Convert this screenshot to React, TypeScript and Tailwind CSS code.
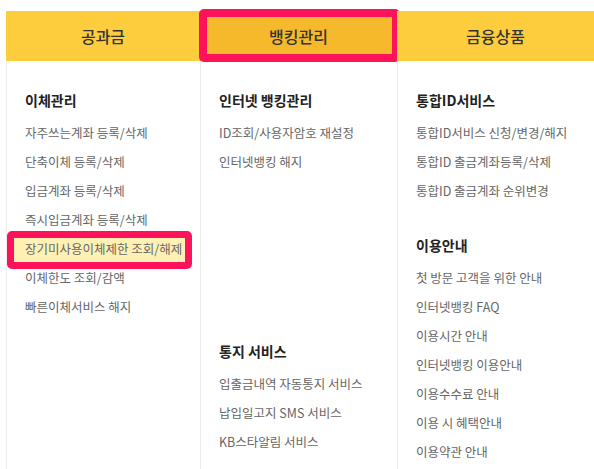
import React from "react";

type Group = {
  title: string;
  items: string[];
  gapTop?: string;
};

const columns: { tab: string; active?: boolean; groups: Group[] }[] = [
  {
    tab: "공과금",
    groups: [
      {
        title: "이체관리",
        items: [
          "자주쓰는계좌 등록/삭제",
          "단축이체 등록/삭제",
          "입금계좌 등록/삭제",
          "즉시입금계좌 등록/삭제",
          "장기미사용이체제한 조회/해제",
          "이체한도 조회/감액",
          "빠른이체서비스 해지",
        ],
      },
    ],
  },
  {
    tab: "뱅킹관리",
    active: true,
    groups: [
      {
        title: "인터넷 뱅킹관리",
        items: ["ID조회/사용자암호 재설정", "인터넷뱅킹 해지"],
      },
      {
        title: "통지 서비스",
        gapTop: "mt-[164px]",
        items: ["입출금내역 자동통지 서비스", "납입일고지 SMS 서비스", "KB스타알림 서비스"],
      },
    ],
  },
  {
    tab: "금융상품",
    groups: [
      {
        title: "통합ID서비스",
        items: ["통합ID서비스 신청/변경/해지", "통합ID 출금계좌등록/삭제", "통합ID 출금계좌 순위변경"],
      },
      {
        title: "이용안내",
        gapTop: "mt-[29px]",
        items: [
          "첫 방문 고객을 위한 안내",
          "인터넷뱅킹 FAQ",
          "이용시간 안내",
          "인터넷뱅킹 이용안내",
          "이용수수료 안내",
          "이용 시 혜택안내",
          "이용약관 안내",
        ],
      },
    ],
  },
];

// item that is marked on the screenshot
const MARKED = "장기미사용이체제한 조회/해제";

const MenuItem = ({ label }: { label: string }) => {
  const marked = label === MARKED;
  return (
    <li className="relative flex h-[29px] items-center">
      {marked && (
        <span className="absolute left-[-18px] top-[-4px] h-[38px] w-[185px] rounded-[5px] border-[7px] border-[#fe1259] bg-[#fff0b4]" />
      )}
      <span className="relative whitespace-nowrap text-[12.5px] text-[#666]">{label}</span>
    </li>
  );
};

export default function App() {
  return (
    <div
      className="h-[469px] w-[594px] overflow-hidden bg-white pl-[6px] pt-[11px]"
      style={{ fontFamily: '"Noto Sans CJK KR", "Noto Sans", sans-serif' }}
    >
      <div className="grid grid-cols-[194px_197px_197px]">
        {columns.map((col) => (
          <div
            key={col.tab}
            className={`relative flex h-[50px] items-center justify-center text-[16px] font-medium text-[#333] ${
              col.active ? "bg-[#f6b92b]" : "bg-[#fdcd3e]"
            }`}
          >
            {col.active && (
              <span className="absolute bottom-[-1px] left-[-1px] right-[-3px] top-[-2px] rounded-[5px] border-[8px] border-[#fe1259]" />
            )}
            <span className="relative">{col.tab}</span>
          </div>
        ))}

        {columns.map((col) => (
          <div key={col.tab + "-body"} className="h-[408px] border-l border-[#ececec] pl-[18px] pt-[29px]">
            {col.groups.map((g) => (
              <div key={g.title} className={g.gapTop}>
                <h4 className="mb-[9px] text-[14px] font-bold leading-[20px] text-[#222]">{g.title}</h4>
                <ul>
                  {g.items.map((it) => (
                    <MenuItem key={it} label={it} />
                  ))}
                </ul>
              </div>
            ))}
          </div>
        ))}
      </div>
    </div>
  );
}
